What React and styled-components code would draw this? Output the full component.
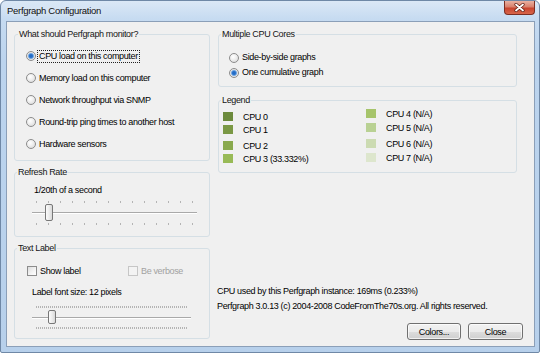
import React from 'react';
import styled, { createGlobalStyle, css } from 'styled-components';

const GlobalStyle = createGlobalStyle`
  html, body {
    margin: 0;
    padding: 0;
    background: #ffffff;
  }
  body {
    font-family: "Liberation Sans", Arial, sans-serif;
    font-size: 9px;
    letter-spacing: -0.35px;
    color: #000;
  }
`;

const Window = styled.div`
  box-sizing: border-box;
  width: 540px;
  height: 353px;
  display: flex;
  flex-direction: column;
  border: 1px solid #6f88a6;
  border-radius: 6px 6px 2px 2px;
  padding: 0 4px 5px 5px;
  background: linear-gradient(to bottom, #dbe8f6 0px, #c6dbf1 18px, #bcd4ee 60px, #b7d0eb 100%);
`;

const TitleBar = styled.div`
  height: 20px;
  display: flex;
  align-items: flex-start;
  padding-left: 1px;
`;

const Title = styled.div`
  flex: 1;
  font-size: 9.5px;
  letter-spacing: -0.3px;
  line-height: 20px;
  color: #101010;
  text-shadow: 0 0 6px rgba(255, 255, 255, 0.9);
`;

const CloseButton = styled.div`
  width: 31px;
  height: 14px;
  box-sizing: border-box;
  border: 1px solid #7c2e22;
  border-top: none;
  border-radius: 0 0 4px 4px;
  background: linear-gradient(to bottom, #e9b1a2 0%, #d9806c 45%, #c8442f 55%, #d8664a 100%);
  display: flex;
  align-items: center;
  justify-content: center;
`;

const Client = styled.div`
  flex: 1;
  min-height: 0;
  border: 1px solid #8b9fb8;
  background: #f0f0f0;
  display: grid;
  grid-template-columns: 196px minmax(0, 1fr);
  column-gap: 8px;
  padding: 12px 11px 6px 7px;
`;

const Column = styled.div`
  display: flex;
  flex-direction: column;
  min-width: 0;
  gap: ${({ $gap }) => $gap}px;
`;

const Group = styled.div`
  box-sizing: border-box;
  width: ${({ $w }) => ($w ? `${$w}px` : 'auto')};
  height: ${({ $h }) => $h}px;
  border: 1px solid #d5dfe5;
  border-radius: 3px;
  padding: 0 0 0 ${({ $pl }) => $pl || 0}px;
  flex: none;
`;

const GroupTitle = styled.div`
  display: table;
  margin: -7px 0 0 ${({ $ml }) => ($ml == null ? 2 : $ml)}px;
  padding: 0 1px;
  line-height: 12px;
  height: 12px;
  background: #f0f0f0;
  color: #151515;
`;

const GroupBody = styled.div`
  padding-top: ${({ $pt }) => $pt}px;
  display: flex;
  flex-direction: column;
`;

const OptionRow = styled.div`
  height: ${({ $h }) => $h}px;
  display: flex;
  align-items: center;
`;

const Radio = styled.span`
  box-sizing: border-box;
  width: 10px;
  height: 10px;
  flex: none;
  border-radius: 50%;
  border: 1px solid #8c8c8c;
  background: radial-gradient(circle at 40% 35%, #ffffff 0, #f0f0f0 40%, #d4d4d4 100%);
  ${({ $checked }) =>
    $checked &&
    css`
      background: radial-gradient(circle at 50% 50%, #1f63bd 0, #2f78cf 1.8px, #8fb8e6 2.8px, #e4e4e4 3.4px, #f4f4f4 100%);
    `}
`;

const OptionText = styled.span`
  margin-left: 1px;
  padding: 0 1px;
  line-height: 11px;
  border: 1px dotted ${({ $focus }) => ($focus ? '#222' : 'transparent')};
  white-space: nowrap;
`;

const Check = styled.span`
  box-sizing: border-box;
  width: 10px;
  height: 10px;
  flex: none;
  border: 1px solid ${({ $disabled }) => ($disabled ? '#c6c6c6' : '#8c8c8c')};
  background: ${({ $disabled }) =>
    $disabled ? '#f3f3f3' : 'linear-gradient(135deg, #dcdcdc 0%, #f4f4f4 60%, #ffffff 100%)'};
`;

const CheckItem = styled.div`
  width: ${({ $w }) => ($w ? `${$w}px` : 'auto')};
  display: flex;
  align-items: center;
  color: ${({ $disabled }) => ($disabled ? '#a2a2a2' : '#000')};
`;

const CheckText = styled.span`
  margin-left: 3px;
`;

const PlainText = styled.div`
  line-height: 14px;
  height: 14px;
  margin: ${({ $m }) => $m};
  white-space: nowrap;
`;

const Slider = styled.div`
  position: relative;
  width: ${({ $w }) => $w}px;
  margin: ${({ $m }) => $m};
  display: flex;
  flex-direction: column;
`;

const Ticks = styled.div`
  height: 2px;
  margin: ${({ $m }) => $m};
  background-image: repeating-linear-gradient(
    to right,
    #b4b4b4 0,
    #b4b4b4 1px,
    transparent 1px,
    transparent ${({ $period }) => $period}px
  );
`;

const Track = styled.div`
  height: 1px;
  margin-top: ${({ $mt }) => $mt}px;
  background: #a9a9a9;
  box-shadow: 0 1px 0 #ffffff;
`;

const Thumb = styled.div`
  position: absolute;
  box-sizing: border-box;
  width: 8px;
  border: 1px solid #777777;
  border-radius: 2px;
  background: linear-gradient(to right, #fbfbfb 0%, #ececec 50%, #d9d9d9 100%);
`;

const Legend = styled.div`
  display: grid;
  grid-template-columns: 143px 1fr;
`;

const LegendColumn = styled.div`
  padding-top: ${({ $pt }) => $pt}px;
  display: flex;
  flex-direction: column;
`;

const LegendItem = styled.div`
  height: 13px;
  margin-top: ${({ $mt }) => $mt}px;
  display: flex;
  align-items: center;
  white-space: nowrap;
`;

const Swatch = styled.span`
  width: 10px;
  height: 9px;
  flex: none;
  margin-right: 10px;
  background: ${({ $color }) => $color};
`;

const Footer = styled.div`
  margin-top: auto;
  display: flex;
  flex-direction: column;
`;

const InfoLine = styled.div`
  line-height: 15px;
  height: 15px;
  margin-left: -1px;
  white-space: nowrap;
`;

const ButtonRow = styled.div`
  margin-top: 9px;
  display: flex;
  justify-content: flex-end;
  gap: 7px;
`;

const Button = styled.button`
  box-sizing: border-box;
  width: ${({ $w }) => $w}px;
  height: 17px;
  padding: 0;
  font: inherit;
  letter-spacing: inherit;
  color: #000;
  border: 1px solid #707070;
  border-radius: 3px;
  background: linear-gradient(to bottom, #f2f2f2 0%, #ebebeb 50%, #dddddd 51%, #cfcfcf 100%);
  box-shadow: inset 0 0 0 1px rgba(255, 255, 255, 0.7);
`;

const monitorOptions = [
  { label: 'CPU load on this computer', checked: true, focus: true },
  { label: 'Memory load on this computer' },
  { label: 'Network throughput via SNMP' },
  { label: 'Round-trip ping times to another host' },
  { label: 'Hardware sensors' },
];

const leftLegend = [
  { label: 'CPU 0', color: '#6c8a3c', mt: 0 },
  { label: 'CPU 1', color: '#7a9844', mt: 0 },
  { label: 'CPU 2', color: '#89a94d', mt: 3 },
  { label: 'CPU 3 (33.332%)', color: '#98ba56', mt: 0 },
];

const rightLegend = [
  { label: 'CPU 4 (N/A)', color: '#a6c46b', mt: 0 },
  { label: 'CPU 5 (N/A)', color: '#b9d193', mt: 1 },
  { label: 'CPU 6 (N/A)', color: '#ccdbb2', mt: 3 },
  { label: 'CPU 7 (N/A)', color: '#dde6cd', mt: 1 },
];

export default function App() {
  return (
    <>
      <GlobalStyle />
      <Window>
        <TitleBar>
          <Title>Perfgraph Configuration</Title>
          <CloseButton>
            <svg width="11" height="9" viewBox="0 0 11 9">
              <path d="M2 1.5 L9 7.5 M9 1.5 L2 7.5" stroke="#5a1a10" strokeWidth="3.2" strokeLinecap="round" />
              <path d="M2 1.5 L9 7.5 M9 1.5 L2 7.5" stroke="#ffffff" strokeWidth="1.8" strokeLinecap="round" />
            </svg>
          </CloseButton>
        </TitleBar>
        <Client>
          <Column $gap={11}>
            <Group $h={127} $pl={11}>
              <GroupTitle $ml={-8}>What should Perfgraph monitor?</GroupTitle>
              <GroupBody $pt={5}>
                {monitorOptions.map((o) => (
                  <OptionRow key={o.label} $h={22}>
                    <Radio $checked={o.checked} />
                    <OptionText $focus={o.focus}>{o.label}</OptionText>
                  </OptionRow>
                ))}
              </GroupBody>
            </Group>
            <Group $h={65} $pl={17}>
              <GroupTitle $ml={-15}>Refresh Rate</GroupTitle>
              <GroupBody $pt={5}>
                <PlainText $m="0 0 0 2px">1/20th of a second</PlainText>
                <Slider $w={165} $m="4px 0 0 0">
                  <Ticks $period={12} $m="0 3px 0 4px" />
                  <Track $mt={9} />
                  <Ticks $period={12} $m="10px 3px 0 4px" />
                  <Thumb style={{ left: 13, top: 3, height: 17 }} />
                </Slider>
              </GroupBody>
            </Group>
            <Group $h={91} $pl={12}>
              <GroupTitle $ml={-10}>Text Label</GroupTitle>
              <GroupBody $pt={10}>
                <OptionRow $h={14}>
                  <CheckItem $w={101}>
                    <Check />
                    <CheckText>Show label</CheckText>
                  </CheckItem>
                  <CheckItem $disabled>
                    <Check $disabled />
                    <CheckText>Be verbose</CheckText>
                  </CheckItem>
                </OptionRow>
                <PlainText $m="7px 0 0 5px">Label font size: 12 pixels</PlainText>
                <Slider $w={159} $m="7px 0 0 5px">
                  <Ticks $period={2} $m="0 3px 0 4px" />
                  <Track $mt={9} />
                  <Ticks $period={2} $m="9px 3px 0 4px" />
                  <Thumb style={{ left: 16, top: 4, height: 14 }} />
                </Slider>
              </GroupBody>
            </Group>
          </Column>
          <Column $gap={13}>
            <Group $w={299} $h={53} $pl={10}>
              <GroupTitle $ml={-8}>Multiple CPU Cores</GroupTitle>
              <GroupBody $pt={10}>
                <OptionRow $h={15}>
                  <Radio />
                  <OptionText>Side-by-side graphs</OptionText>
                </OptionRow>
                <OptionRow $h={15}>
                  <Radio $checked />
                  <OptionText>One cumulative graph</OptionText>
                </OptionRow>
              </GroupBody>
            </Group>
            <Group $w={299} $h={73} $pl={4}>
              <GroupTitle $ml={-2}>Legend</GroupTitle>
              <Legend>
                <LegendColumn $pt={4}>
                  {leftLegend.map((l) => (
                    <LegendItem key={l.label} $mt={l.mt}>
                      <Swatch $color={l.color} />
                      {l.label}
                    </LegendItem>
                  ))}
                </LegendColumn>
                <LegendColumn $pt={1}>
                  {rightLegend.map((l) => (
                    <LegendItem key={l.label} $mt={l.mt}>
                      <Swatch $color={l.color} />
                      {l.label}
                    </LegendItem>
                  ))}
                </LegendColumn>
              </Legend>
            </Group>
            <Footer>
              <InfoLine>CPU used by this Perfgraph instance: 169ms (0.233%)</InfoLine>
              <InfoLine>Perfgraph 3.0.13 (c) 2004-2008 CodeFromThe70s.org. All rights reserved.</InfoLine>
              <ButtonRow>
                <Button $w={54}>Colors...</Button>
                <Button $w={55}>Close</Button>
              </ButtonRow>
            </Footer>
          </Column>
        </Client>
      </Window>
    </>
  );
}
